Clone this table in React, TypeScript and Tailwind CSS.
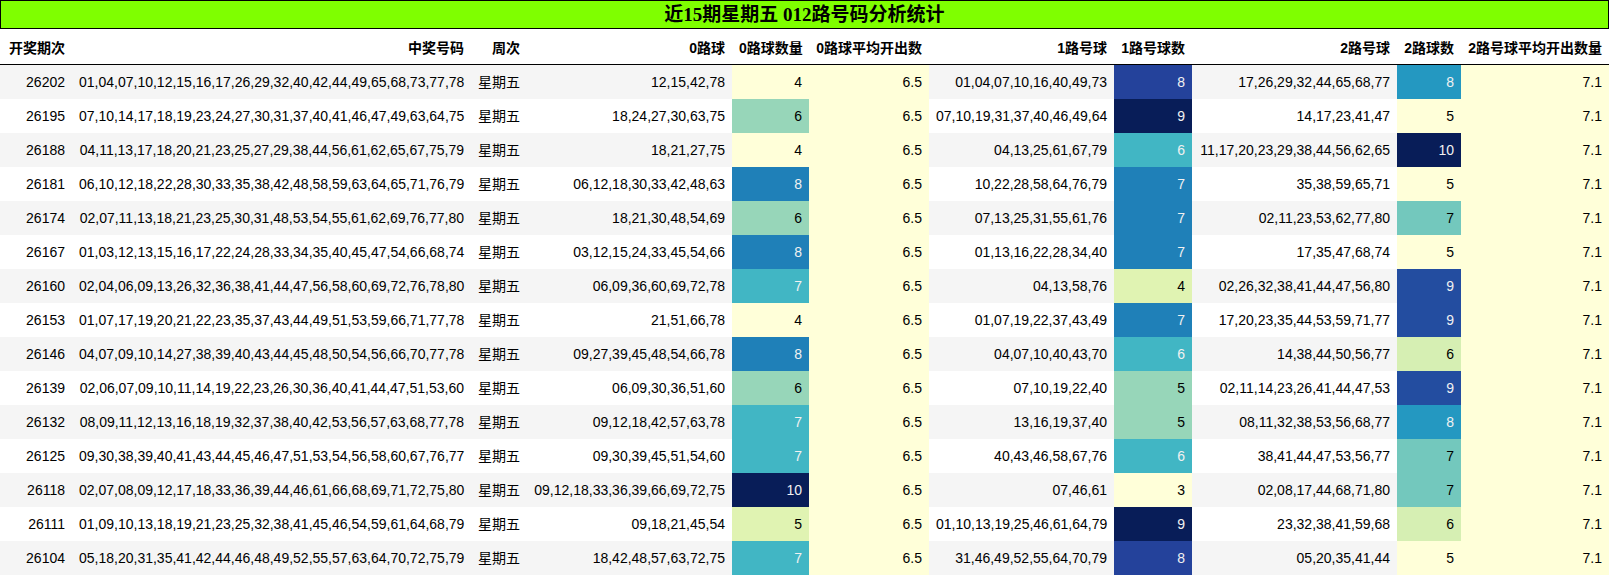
import React from "react";

type Row = [string, string, string, number, string, number, string, number];

const rows: Row[] = [
  ["26202", "01,04,07,10,12,15,16,17,26,29,32,40,42,44,49,65,68,73,77,78", "12,15,42,78", 4, "01,04,07,10,16,40,49,73", 8, "17,26,29,32,44,65,68,77", 8],
  ["26195", "07,10,14,17,18,19,23,24,27,30,31,37,40,41,46,47,49,63,64,75", "18,24,27,30,63,75", 6, "07,10,19,31,37,40,46,49,64", 9, "14,17,23,41,47", 5],
  ["26188", "04,11,13,17,18,20,21,23,25,27,29,38,44,56,61,62,65,67,75,79", "18,21,27,75", 4, "04,13,25,61,67,79", 6, "11,17,20,23,29,38,44,56,62,65", 10],
  ["26181", "06,10,12,18,22,28,30,33,35,38,42,48,58,59,63,64,65,71,76,79", "06,12,18,30,33,42,48,63", 8, "10,22,28,58,64,76,79", 7, "35,38,59,65,71", 5],
  ["26174", "02,07,11,13,18,21,23,25,30,31,48,53,54,55,61,62,69,76,77,80", "18,21,30,48,54,69", 6, "07,13,25,31,55,61,76", 7, "02,11,23,53,62,77,80", 7],
  ["26167", "01,03,12,13,15,16,17,22,24,28,33,34,35,40,45,47,54,66,68,74", "03,12,15,24,33,45,54,66", 8, "01,13,16,22,28,34,40", 7, "17,35,47,68,74", 5],
  ["26160", "02,04,06,09,13,26,32,36,38,41,44,47,56,58,60,69,72,76,78,80", "06,09,36,60,69,72,78", 7, "04,13,58,76", 4, "02,26,32,38,41,44,47,56,80", 9],
  ["26153", "01,07,17,19,20,21,22,23,35,37,43,44,49,51,53,59,66,71,77,78", "21,51,66,78", 4, "01,07,19,22,37,43,49", 7, "17,20,23,35,44,53,59,71,77", 9],
  ["26146", "04,07,09,10,14,27,38,39,40,43,44,45,48,50,54,56,66,70,77,78", "09,27,39,45,48,54,66,78", 8, "04,07,10,40,43,70", 6, "14,38,44,50,56,77", 6],
  ["26139", "02,06,07,09,10,11,14,19,22,23,26,30,36,40,41,44,47,51,53,60", "06,09,30,36,51,60", 6, "07,10,19,22,40", 5, "02,11,14,23,26,41,44,47,53", 9],
  ["26132", "08,09,11,12,13,16,18,19,32,37,38,40,42,53,56,57,63,68,77,78", "09,12,18,42,57,63,78", 7, "13,16,19,37,40", 5, "08,11,32,38,53,56,68,77", 8],
  ["26125", "09,30,38,39,40,41,43,44,45,46,47,51,53,54,56,58,60,67,76,77", "09,30,39,45,51,54,60", 7, "40,43,46,58,67,76", 6, "38,41,44,47,53,56,77", 7],
  ["26118", "02,07,08,09,12,17,18,33,36,39,44,46,61,66,68,69,71,72,75,80", "09,12,18,33,36,39,66,69,72,75", 10, "07,46,61", 3, "02,08,17,44,68,71,80", 7],
  ["26111", "01,09,10,13,18,19,21,23,25,32,38,41,45,46,54,59,61,64,68,79", "09,18,21,45,54", 5, "01,10,13,19,25,46,61,64,79", 9, "23,32,38,41,59,68", 6],
  ["26104", "05,18,20,31,35,41,42,44,46,48,49,52,55,57,63,64,70,72,75,79", "18,42,48,57,63,72,75", 7, "31,46,49,52,55,64,70,79", 8, "05,20,35,41,44", 5],
];

const c0: Record<number, string> = {
  4: "bg-[#ffffd9] text-black",
  5: "bg-[#e0f3b2] text-black",
  6: "bg-[#97d6b9] text-black",
  7: "bg-[#41b6c4] text-[#f1f1f1]",
  8: "bg-[#1f80b8] text-[#f1f1f1]",
  9: "bg-[#22509f] text-[#f1f1f1]",
  10: "bg-[#081d58] text-[#f1f1f1]",
};

const c1: Record<number, string> = {
  3: "bg-[#ffffd9] text-black",
  4: "bg-[#e0f3b2] text-black",
  5: "bg-[#97d6b9] text-black",
  6: "bg-[#41b6c4] text-[#f1f1f1]",
  7: "bg-[#1f80b8] text-[#f1f1f1]",
  8: "bg-[#24429b] text-[#f1f1f1]",
  9: "bg-[#081d58] text-[#f1f1f1]",
};

const c2: Record<number, string> = {
  5: "bg-[#ffffd9] text-black",
  6: "bg-[#d6efb3] text-black",
  7: "bg-[#73c8bd] text-black",
  8: "bg-[#2498c1] text-[#f1f1f1]",
  9: "bg-[#234da0] text-[#f1f1f1]",
  10: "bg-[#081d58] text-[#f1f1f1]",
};

const headers = [
  "开奖期次",
  "中奖号码",
  "周次",
  "0路球",
  "0路球数量",
  "0路球平均开出数",
  "1路号球",
  "1路号球数",
  "2路号球",
  "2路球数",
  "2路号球平均开出数量",
];

const td = "h-[34px] px-[7px] py-0 leading-[20px] text-right align-middle whitespace-nowrap";
const th =
  "h-[36px] px-[7px] pt-[9px] pb-[6px] leading-[20px] text-right align-bottom whitespace-nowrap font-bold border-b border-black";

export default function App() {
  return (
    <div
      className="w-[1610px] bg-white text-[14px] text-black"
      style={{ fontFamily: '"Liberation Sans", "Noto Sans CJK SC", sans-serif' }}
    >
      <div
        className="w-[1609px] h-[29px] border border-black bg-[#7fff00] flex items-center justify-center text-[19px] font-bold leading-none"
        style={{ fontFamily: '"Liberation Serif", "Noto Sans CJK SC", serif' }}
      >
        近15期星期五 012路号码分析统计
      </div>
      <table className="table-fixed border-separate border-spacing-0 w-[1609px]">
        <colgroup>
          <col className="w-[72px]" />
          <col className="w-[399px]" />
          <col className="w-[56px]" />
          <col className="w-[205px]" />
          <col className="w-[77px]" />
          <col className="w-[120px]" />
          <col className="w-[185px]" />
          <col className="w-[78px]" />
          <col className="w-[205px]" />
          <col className="w-[64px]" />
          <col className="w-[148px]" />
        </colgroup>
        <thead>
          <tr className="bg-white">
            {headers.map((h) => (
              <th key={h} className={th}>
                {h}
              </th>
            ))}
          </tr>
        </thead>
        <tbody>
          {rows.map((r, i) => (
            <tr key={r[0]} className={i % 2 === 0 ? "bg-[#f5f5f5]" : "bg-white"}>
              <td className={td}>{r[0]}</td>
              <td className={td}>{r[1]}</td>
              <td className={td}>星期五</td>
              <td className={td}>{r[2]}</td>
              <td className={`${td} ${c0[r[3]]}`}>{r[3]}</td>
              <td className={`${td} bg-[#ffffd9]`}>6.5</td>
              <td className={td}>{r[4]}</td>
              <td className={`${td} ${c1[r[5]]}`}>{r[5]}</td>
              <td className={td}>{r[6]}</td>
              <td className={`${td} ${c2[r[7]]}`}>{r[7]}</td>
              <td className={`${td} bg-[#ffffd9]`}>7.1</td>
            </tr>
          ))}
        </tbody>
      </table>
    </div>
  );
}
